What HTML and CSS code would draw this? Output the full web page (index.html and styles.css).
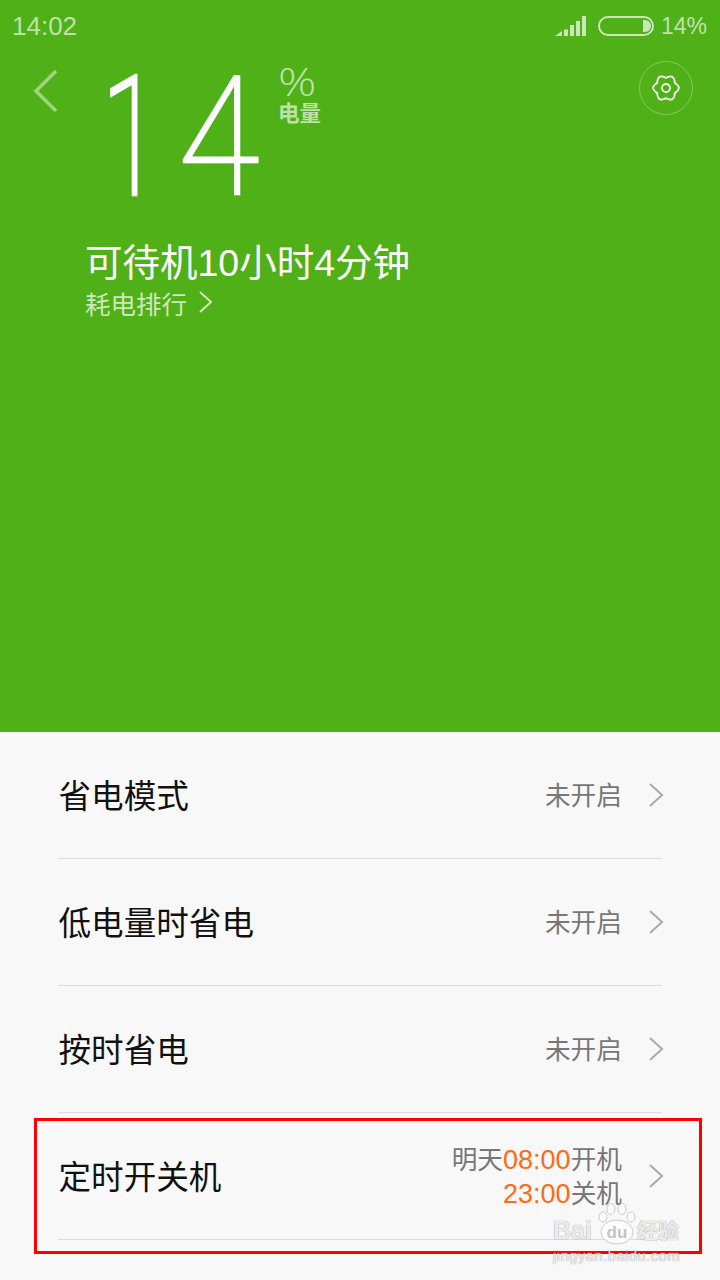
FILE: index.html
```html
<!DOCTYPE html>
<html lang="zh">
<head>
<meta charset="utf-8">
<title>电量</title>
<link rel="stylesheet" href="styles.css">
</head>
<body>
<main class="screen">
  <section class="hero">
    <div class="status">
      <span class="clock">14:02</span>
      <div class="status-right">
        <svg class="signal" width="32" height="22" viewBox="0 0 32 22"><path d="M0 21 7 16V21ZM9 14.500h4V21H9ZM15 10h4V21h-4ZM21 6h4V21h-4ZM27 1h4V21h-4Z"/></svg>
        <svg class="battery" width="56" height="20" viewBox="0 0 56 20"><rect x="1" y="1" width="54" height="18" rx="9"/><path class="battery-fill" d="M45 4h2a6 6 0 0 1 0 12h-2Z"/></svg>
        <span class="pct">14%</span>
      </div>
    </div>
    <div class="top">
      <svg class="back" width="26" height="44" viewBox="0 0 26 44"><path d="M23 2 3 22 23 42"/></svg>
      <div class="level"><span class="digit digit-one">1</span><span class="digit digit-four">4</span></div>
      <div class="unit">
        <span class="unit-sign">%</span>
        <span class="unit-label">电量</span>
      </div>
      <div class="gear">
        <svg width="54" height="54" viewBox="-27 -27 54 54"><circle class="gear-ring" r="26.500"/><path class="gear-line" d="M10.200-4.120Q15.500 0 10.200 4.120Q8.230 4.750 8.670 6.770Q7.750 13.420 1.530 10.890Q0 9.500-1.530 10.890Q-7.750 13.420-8.670 6.770Q-8.230 4.750-10.200 4.120Q-15.500 0-10.200-4.120Q-8.230-4.750-8.670-6.770Q-7.750-13.420-1.530-10.890Q0-9.500 1.530-10.890Q7.750-13.420 8.670-6.770Q8.230-4.750 10.200-4.120Z"/><circle class="gear-line" r="4"/></svg>
      </div>
    </div>
    <div class="standby">可待机10小时4分钟</div>
    <div class="rank">耗电排行
      <svg width="16" height="24" viewBox="0 0 16 24"><path d="M2 2 13 12 2 22"/></svg>
    </div>
  </section>
  <section class="list">
    <div class="row">
      <span class="row-title">省电模式</span>
      <span class="row-value">未开启</span>
      <svg class="chev" width="16" height="26" viewBox="0 0 16 26"><path d="M2 2 14 13 2 24"/></svg>
    </div>
    <div class="row">
      <span class="row-title">低电量时省电</span>
      <span class="row-value">未开启</span>
      <svg class="chev" width="16" height="26" viewBox="0 0 16 26"><path d="M2 2 14 13 2 24"/></svg>
    </div>
    <div class="row">
      <span class="row-title">按时省电</span>
      <span class="row-value">未开启</span>
      <svg class="chev" width="16" height="26" viewBox="0 0 16 26"><path d="M2 2 14 13 2 24"/></svg>
    </div>
    <div class="row">
      <span class="row-title">定时开关机</span>
      <span class="row-value row-value-stack">
        <span>明天<em>08:00</em>开机</span>
        <span><em>23:00</em>关机</span>
      </span>
      <svg class="chev" width="16" height="26" viewBox="0 0 16 26"><path d="M2 2 14 13 2 24"/></svg>
    </div>
  </section>
  <div class="highlight"></div>
  <div class="watermark">
    <div class="wm-top">
      <span>Bai</span>
      <svg class="wm-paw" width="38" height="42" viewBox="0 0 38 42">
        <ellipse cx="5" cy="14" rx="4" ry="5"/><ellipse cx="13" cy="6" rx="4" ry="5.500"/><ellipse cx="24" cy="6" rx="4" ry="5.500"/><ellipse cx="33" cy="14" rx="4" ry="5"/>
        <ellipse cx="19" cy="29" rx="16" ry="12"/>
        <text class="wm-du" x="19" y="35">du</text>
      </svg>
      <span class="wm-cn">经验</span>
    </div>
    <div class="wm-url">jingyan.baidu.com</div>
  </div>
</main>
</body>
</html>
```
FILE: styles.css
```css
* { box-sizing: border-box; }
html, body { margin: 0; padding: 0; }
body {
  width: 720px;
  height: 1280px;
  overflow: hidden;
  font-family: "Noto Sans CJK SC", "Liberation Sans", sans-serif;
}
.screen {
  position: relative;
  width: 720px;
  height: 1280px;
  background: #f8f8f8;
}
.hero {
  height: 732px;
  background: #50b018;
  color: #fff;
}
.status {
  height: 52px;
  padding: 0 13px 0 12px;
  display: flex;
  align-items: center;
  justify-content: space-between;
  color: rgba(255, 255, 255, .65);
  font-family: "Liberation Sans", sans-serif;
}
.clock { font-size: 26px; }
.status-right { display: flex; align-items: center; gap: 11px; }
.signal { fill: rgba(255, 255, 255, .7); }
.battery rect { fill: none; stroke: rgba(255, 255, 255, .7); stroke-width: 2; }
.battery-fill { fill: rgba(255, 255, 255, .7); }
.pct { font-size: 23px; margin-left: -4px; }
.top {
  display: flex;
  align-items: flex-start;
  padding: 0 27px 0 33px;
  height: 168px;
}
.back { margin-top: 17px; flex: none; fill: none; stroke: rgba(255, 255, 255, .45); stroke-width: 3.500; }
.level {
  display: flex;
  flex: none;
  margin-left: 43px;
  margin-top: -9px;
  width: 176px;
  font-family: Roboto, sans-serif;
  font-weight: 100;
  font-size: 165px;
  line-height: 190px;
}
.digit {
  display: block;
  flex: none;
  -webkit-text-stroke: 2.500px #fff;
  transform-origin: left center;
}
.digit-one { width: 76px; transform: scaleX(.64); -webkit-text-stroke-width: 4.500px; }
.digit-four { width: 100px; transform: scaleX(.9); }
.unit { display: flex; flex-direction: column; margin-top: 11px; width: 60px; color: rgba(255, 255, 255, .65); }
.unit-sign {
  font-family: "Open Sans", sans-serif;
  font-weight: 300;
  font-size: 38px;
  line-height: 36px;
  transform: scaleX(1.25);
  transform-origin: left center;
}
.unit-label { font-size: 21.500px; line-height: 26px; font-weight: 700; }
.gear { margin-left: auto; margin-top: 9px; height: 54px; }
.gear-ring { fill: none; stroke: rgba(255, 255, 255, .3); stroke-width: 1; }
.gear-line { fill: none; stroke: #fff; stroke-width: 1.800; opacity: .95; }
.standby {
  margin-left: 85px;
  margin-top: 18px;
  font-size: 37.500px;
  line-height: 50px;
  font-family: "Liberation Sans", "Noto Sans CJK SC", sans-serif;
}
.rank {
  margin-left: 85px;
  margin-top: -4px;
  display: flex;
  align-items: center;
  gap: 11px;
  height: 36px;
  font-size: 25.500px;
  color: rgba(255, 255, 255, .72);
}
.rank svg { fill: none; stroke: rgba(255, 255, 255, .72); stroke-width: 2; }
.list { padding: 0 58px; }
.row {
  height: 127px;
  display: flex;
  align-items: center;
  border-bottom: 1px solid #dcdcdc;
}
.row-title { font-size: 32.600px; color: #111; flex: 1; white-space: nowrap; padding: 0 0 3px .5px; }
.row-value { font-size: 25.700px; color: #777; white-space: nowrap; padding-bottom: 3px; }
.row-value-stack {
  display: flex;
  flex-direction: column;
  align-items: flex-end;
  line-height: 34px;
  padding: 1px 0 0;
  font-family: "Liberation Sans", "Noto Sans CJK SC", sans-serif;
}
.row-value-stack em { font-style: normal; font-size: 27px; color: #ff6a13; }
.chev { margin: 0 -2px 0 26px; flex: none; fill: none; stroke: #aaa; stroke-width: 2; }
.highlight {
  position: absolute;
  left: 34px;
  top: 1118px;
  width: 668px;
  height: 136px;
  border: 3px solid #f00;
}
.watermark {
  position: absolute;
  left: 553px;
  top: 1203px;
  color: rgba(255, 255, 255, .85);
  font-family: "Liberation Sans", "Noto Sans CJK SC", sans-serif;
  text-shadow: 0 0 1px rgba(110, 110, 110, .9);
  white-space: nowrap;
}
.wm-top { display: flex; align-items: flex-end; gap: 6px; font-size: 25px; line-height: 30px; font-weight: 700; }
.wm-paw { fill: rgba(255, 255, 255, .85); stroke: rgba(170, 170, 170, .6); stroke-width: 1; flex: none; }
.wm-du { fill: #c4c4c4; stroke: none; font-size: 17px; font-weight: 700; text-anchor: middle; text-shadow: none; }
.wm-cn { font-size: 21px; line-height: 28px; margin-left: -5px; }
.wm-url { font-size: 14.500px; line-height: 18px; letter-spacing: .6px; margin-top: 2px; }
```
